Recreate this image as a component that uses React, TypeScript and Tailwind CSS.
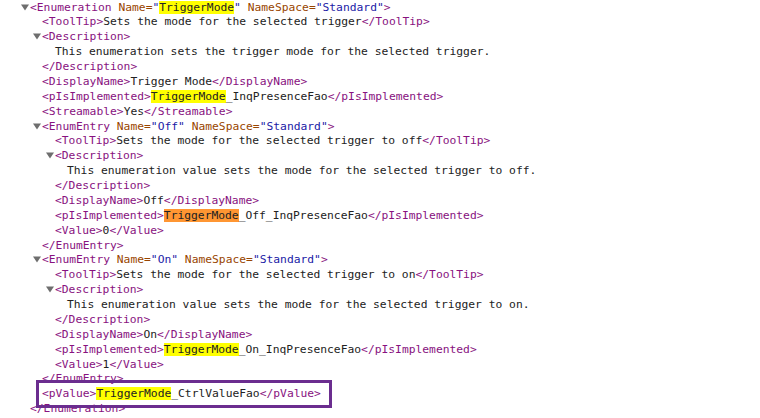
type Kind = 'tag' | 'attr' | 'val' | 'txt' | 'hl' | 'cur';
type Part = [Kind, string];

interface Line {
  depth: number;
  toggle?: boolean;
  parts: Part[];
}

const kindClass: Record<Kind, string> = {
  tag: 'text-[#881280]',
  attr: 'text-[#994500]',
  val: 'text-[#1a1aa6]',
  txt: 'text-[#222222]',
  hl: 'bg-[#ffff00] text-[#222222]',
  cur: 'bg-[#ff9632] text-[#222222]',
};

const depthClass = ['pl-[30px]', 'pl-[42px]', 'pl-[55px]', 'pl-[67px]'];

const lines: Line[] = [
  {
    depth: 0,
    toggle: true,
    parts: [
      ['tag', '<Enumeration'],
      ['attr', ' Name='],
      ['val', '"'],
      ['hl', 'TriggerMode'],
      ['val', '"'],
      ['attr', ' NameSpace='],
      ['val', '"Standard"'],
      ['tag', '>'],
    ],
  },
  {
    depth: 1,
    parts: [
      ['tag', '<ToolTip>'],
      ['txt', 'Sets the mode for the selected trigger'],
      ['tag', '</ToolTip>'],
    ],
  },
  { depth: 1, toggle: true, parts: [['tag', '<Description>']] },
  { depth: 2, parts: [['txt', 'This enumeration sets the trigger mode for the selected trigger.']] },
  { depth: 1, parts: [['tag', '</Description>']] },
  {
    depth: 1,
    parts: [
      ['tag', '<DisplayName>'],
      ['txt', 'Trigger Mode'],
      ['tag', '</DisplayName>'],
    ],
  },
  {
    depth: 1,
    parts: [
      ['tag', '<pIsImplemented>'],
      ['hl', 'TriggerMode'],
      ['txt', '_InqPresenceFao'],
      ['tag', '</pIsImplemented>'],
    ],
  },
  {
    depth: 1,
    parts: [
      ['tag', '<Streamable>'],
      ['txt', 'Yes'],
      ['tag', '</Streamable>'],
    ],
  },
  {
    depth: 1,
    toggle: true,
    parts: [
      ['tag', '<EnumEntry'],
      ['attr', ' Name='],
      ['val', '"Off"'],
      ['attr', ' NameSpace='],
      ['val', '"Standard"'],
      ['tag', '>'],
    ],
  },
  {
    depth: 2,
    parts: [
      ['tag', '<ToolTip>'],
      ['txt', 'Sets the mode for the selected trigger to off'],
      ['tag', '</ToolTip>'],
    ],
  },
  { depth: 2, toggle: true, parts: [['tag', '<Description>']] },
  {
    depth: 3,
    parts: [['txt', 'This enumeration value sets the mode for the selected trigger to off.']],
  },
  { depth: 2, parts: [['tag', '</Description>']] },
  {
    depth: 2,
    parts: [
      ['tag', '<DisplayName>'],
      ['txt', 'Off'],
      ['tag', '</DisplayName>'],
    ],
  },
  {
    depth: 2,
    parts: [
      ['tag', '<pIsImplemented>'],
      ['cur', 'TriggerMode'],
      ['txt', '_Off_InqPresenceFao'],
      ['tag', '</pIsImplemented>'],
    ],
  },
  {
    depth: 2,
    parts: [
      ['tag', '<Value>'],
      ['txt', '0'],
      ['tag', '</Value>'],
    ],
  },
  { depth: 1, parts: [['tag', '</EnumEntry>']] },
  {
    depth: 1,
    toggle: true,
    parts: [
      ['tag', '<EnumEntry'],
      ['attr', ' Name='],
      ['val', '"On"'],
      ['attr', ' NameSpace='],
      ['val', '"Standard"'],
      ['tag', '>'],
    ],
  },
  {
    depth: 2,
    parts: [
      ['tag', '<ToolTip>'],
      ['txt', 'Sets the mode for the selected trigger to on'],
      ['tag', '</ToolTip>'],
    ],
  },
  { depth: 2, toggle: true, parts: [['tag', '<Description>']] },
  {
    depth: 3,
    parts: [['txt', 'This enumeration value sets the mode for the selected trigger to on.']],
  },
  { depth: 2, parts: [['tag', '</Description>']] },
  {
    depth: 2,
    parts: [
      ['tag', '<DisplayName>'],
      ['txt', 'On'],
      ['tag', '</DisplayName>'],
    ],
  },
  {
    depth: 2,
    parts: [
      ['tag', '<pIsImplemented>'],
      ['hl', 'TriggerMode'],
      ['txt', '_On_InqPresenceFao'],
      ['tag', '</pIsImplemented>'],
    ],
  },
  {
    depth: 2,
    parts: [
      ['tag', '<Value>'],
      ['txt', '1'],
      ['tag', '</Value>'],
    ],
  },
  { depth: 1, parts: [['tag', '</EnumEntry>']] },
  {
    depth: 1,
    parts: [
      ['tag', '<pValue>'],
      ['hl', 'TriggerMode'],
      ['txt', '_CtrlValueFao'],
      ['tag', '</pValue>'],
    ],
  },
  { depth: 0, parts: [['tag', '</Enumeration>']] },
];

const Toggle = () => (
  <svg
    className="inline-block -ml-[9px] mr-[1px] mb-[1px] align-middle"
    width="8"
    height="7"
    viewBox="0 0 8 7"
  >
    <path d="M0 0.5 L8 0.5 L4 6.5 Z" fill="#6e6e6e" />
  </svg>
);

export default function App() {
  return (
    <div className="w-[760px] h-[418px] bg-white overflow-hidden">
      <div
        className="relative pt-[0.5px] text-[11.3px] leading-[14.875px] whitespace-pre"
        style={{ fontFamily: '"DejaVu Sans Mono", "Liberation Mono", monospace' }}
      >
        {lines.map((line, i) => (
          <div key={i} className={depthClass[line.depth]}>
            {line.toggle && <Toggle />}
            {line.parts.map(([kind, text], j) => (
              <span key={j} className={kindClass[kind]}>
                {text}
              </span>
            ))}
          </div>
        ))}

        {/* callout box round the pValue line */}
        <div className="absolute left-[36px] top-[380px] w-[296px] h-[28px] border-[3px] border-[#6b2d8f]" />
      </div>
    </div>
  );
}
